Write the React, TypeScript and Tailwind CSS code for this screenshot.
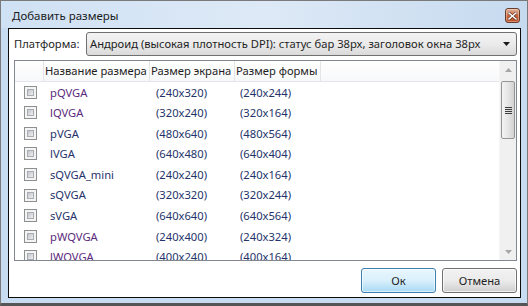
import type { ReactNode } from "react";

type SizeRow = {
  name: string;
  screen: string;
  form: string;
  tint: "violet" | "navy";
};

const rows: SizeRow[] = [
  { name: "pQVGA", screen: "(240x320)", form: "(240x244)", tint: "violet" },
  { name: "lQVGA", screen: "(320x240)", form: "(320x164)", tint: "violet" },
  { name: "pVGA", screen: "(480x640)", form: "(480x564)", tint: "navy" },
  { name: "lVGA", screen: "(640x480)", form: "(640x404)", tint: "navy" },
  { name: "sQVGA_mini", screen: "(240x240)", form: "(240x164)", tint: "navy" },
  { name: "sQVGA", screen: "(320x320)", form: "(320x244)", tint: "navy" },
  { name: "sVGA", screen: "(640x640)", form: "(640x564)", tint: "navy" },
  { name: "pWQVGA", screen: "(240x400)", form: "(240x324)", tint: "violet" },
  { name: "lWQVGA", screen: "(400x240)", form: "(400x164)", tint: "violet" },
];

function CloseButton() {
  return (
    <div className="flex h-[15px] w-[15px] items-center justify-center rounded-[3px] border border-[#6b3b25] bg-gradient-to-b from-[#e2b39b] via-[#c8673f] to-[#b84d25] shadow-[inset_0_0_0_1px_rgba(255,255,255,0.35)]">
      <svg width="9" height="8" viewBox="0 0 9 8">
        <path d="M1 1 L8 7 M8 1 L1 7" stroke="#4a2414" strokeWidth="2.6" strokeLinecap="square" />
        <path d="M1 1 L8 7 M8 1 L1 7" stroke="#ffffff" strokeWidth="1.5" strokeLinecap="square" />
      </svg>
    </div>
  );
}

function Checkbox() {
  return (
    <div className="h-[13px] w-[13px] border border-[#8e8f8f] bg-[#f4f4f4] p-[2px]">
      <div className="h-full w-full border border-[#a9adb3] bg-gradient-to-br from-[#c3c7cd] to-[#eeeeee]" />
    </div>
  );
}

function HeaderCell({ width, children }: { width: string; children?: ReactNode }) {
  return (
    <div
      className={`${width} flex h-full shrink-0 items-center whitespace-nowrap border-r border-[#e3e5e8] pl-[1px] text-[#1e1e1e]`}
    >
      {children}
    </div>
  );
}

function ScrollBar() {
  return (
    <div className="flex w-[17px] shrink-0 flex-col items-center border-l border-[#f6f6f6] bg-[#f0f0f0]">
      <div className="flex h-[17px] w-full items-center justify-center">
        <svg width="7" height="4" viewBox="0 0 7 4">
          <path d="M0 4 L3.5 0 L7 4 Z" fill="#a6a6a6" />
        </svg>
      </div>
      <div className="mt-[3px] flex h-[58px] w-[14px] items-center justify-center rounded-[2px] border border-[#959595] bg-gradient-to-r from-[#f3f3f3] via-[#e6e6e6] to-[#d2d2d2]">
        <div className="flex flex-col gap-[1px]">
          <div className="h-[1px] w-[7px] bg-[#3c3c3c]" />
          <div className="h-[1px] w-[7px] bg-[#3c3c3c]" />
          <div className="h-[1px] w-[7px] bg-[#3c3c3c]" />
          <div className="h-[1px] w-[7px] bg-[#3c3c3c]" />
        </div>
      </div>
      <div className="flex-1" />
      <div className="flex h-[17px] w-full items-center justify-center">
        <svg width="7" height="4" viewBox="0 0 7 4">
          <path d="M0 0 L7 0 L3.5 4 Z" fill="#a6a6a6" />
        </svg>
      </div>
    </div>
  );
}

export default function App() {
  return (
    <div
      className="flex h-[306px] w-[528px] flex-col border border-b-[3px] border-[#7a7a7a] border-b-[#555555] bg-[#c7dcf1] text-[11.2px] leading-none"
      style={{ fontFamily: '"Segoe UI", "Noto Sans", sans-serif' }}
    >
      {/* caption */}
      <div className="flex h-[27px] shrink-0 items-center bg-gradient-to-r from-[#cfe1f4] via-[#dde9f6] to-[#c6daef] pl-[11px] pr-[7px]">
        <span className="mt-[3px] text-[11.5px] text-[#1b1b1b]">Добавить размеры</span>
        <div className="flex-1" />
        <div className="mt-[2px]">
          <CloseButton />
        </div>
      </div>

      <div className="flex min-h-0 flex-1 pb-[5px] pl-[7px] pr-[6px]">
        <div className="flex h-[270px] w-[513px] flex-col border border-[#0c0c0c] bg-white pl-[5px] pr-[3px] pt-[3px]">
          {/* platform */}
          <div className="flex h-[24px] items-center">
            <span className="w-[72px] shrink-0 text-[#1e1e1e]">Платформа:</span>
            <div className="flex h-full flex-1 items-center rounded-[3px] border border-[#707070] bg-gradient-to-b from-[#f3f3f3] via-[#ebebeb] to-[#dadada] pl-[3px] pr-[6px]">
              <span className="flex-1 whitespace-nowrap text-[#1e1e1e]">
                Андроид (высокая плотность DPI): статус бар 38px, заголовок окна 38px
              </span>
              <svg width="7" height="4" viewBox="0 0 7 4">
                <path d="M0 0 L7 0 L3.5 4 Z" fill="#1a1a1a" />
              </svg>
            </div>
          </div>

          {/* list */}
          <div className="mt-[4px] flex h-[201px] overflow-hidden border border-[#828790]">
            <div className="flex min-w-0 flex-1 flex-col overflow-hidden">
              <div className="flex h-[21px] shrink-0 border-b border-[#e4e6e9] bg-gradient-to-b from-white to-[#f7f8f9]">
                <HeaderCell width="w-[29px]" />
                <HeaderCell width="w-[106px]">Название размера</HeaderCell>
                <HeaderCell width="w-[85px]">Размер экрана</HeaderCell>
                <HeaderCell width="w-[86px]">Размер формы</HeaderCell>
              </div>
              <div className="flex flex-col">
                {rows.map((row) => (
                  <div key={row.name} className="flex h-[20.57px] shrink-0 items-center">
                    <div className="flex w-[35px] shrink-0 pl-[9px]">
                      <Checkbox />
                    </div>
                    <span
                      className={`w-[106px] shrink-0 ${row.tint === "violet" ? "text-[#5b2a7c]" : "text-[#26326a]"}`}
                    >
                      {row.name}
                    </span>
                    <span className="w-[84px] shrink-0 text-[#23336a]">{row.screen}</span>
                    <span className="shrink-0 text-[#23336a]">{row.form}</span>
                  </div>
                ))}
              </div>
            </div>
            <ScrollBar />
          </div>

          {/* buttons */}
          <div className="mt-[7px] flex justify-end gap-[6px]">
            <button
              type="button"
              className="h-[25px] w-[75px] rounded-[3px] border border-[#3c7fb1] bg-gradient-to-b from-[#eaf6fd] via-[#d9f0fc] to-[#a7d9f5] text-[#1e1e1e] shadow-[inset_0_0_0_1px_rgba(255,255,255,0.6)]"
            >
              Ок
            </button>
            <button
              type="button"
              className="h-[25px] w-[75px] rounded-[3px] border border-[#707070] bg-gradient-to-b from-[#f2f2f2] via-[#ebebeb] to-[#cfcfcf] text-[#1e1e1e] shadow-[inset_0_0_0_1px_rgba(255,255,255,0.7)]"
            >
              Отмена
            </button>
          </div>
        </div>
      </div>
    </div>
  );
}
